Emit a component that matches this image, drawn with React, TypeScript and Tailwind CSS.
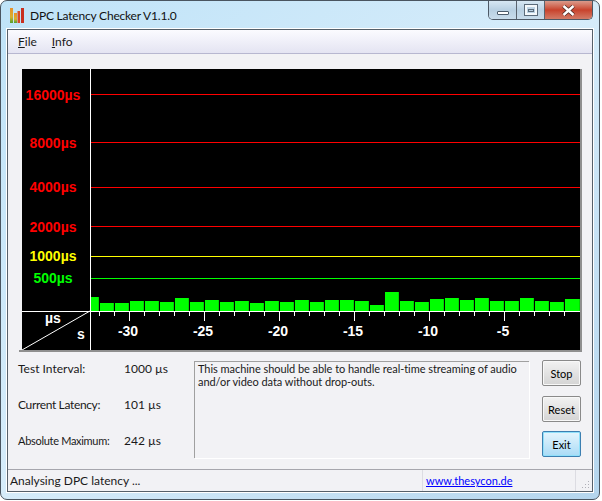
const bars: [number, number, number][] = [
  [91, 8, 297],
  ...[303, 303, 301, 301, 302, 298, 302, 300, 302, 301, 303, 301, 302, 300, 302, 300, 300, 301, 305, 292, 301, 302, 299, 298, 300, 298, 301, 301, 298, 301, 302, 299].map(
    (t, i): [number, number, number] => [100 + i * 15, i === 31 ? 15 : 14, t],
  ),
];

const gridLines = [
  { y: 94, c: "#ff0000", label: "16000µs", ty: 100 },
  { y: 142, c: "#ff0000", label: "8000µs", ty: 148 },
  { y: 187, c: "#ff0000", label: "4000µs", ty: 192 },
  { y: 226, c: "#ff0000", label: "2000µs", ty: 232 },
  { y: 256, c: "#ffff00", label: "1000µs", ty: 261 },
  { y: 278, c: "#00ff00", label: "500µs", ty: 283 },
];

const majors = [
  { x: 129, t: "-30" },
  { x: 204, t: "-25" },
  { x: 279, t: "-20" },
  { x: 354, t: "-15" },
  { x: 429, t: "-10" },
  { x: 504, t: "-5" },
];

const ticks = Array.from({ length: 32 }, (_, i) => 99 + i * 15);

function Chart() {
  return (
    <svg width={558} height={281} viewBox="22 69 558 281" className="block bg-black font-['Liberation_Sans',sans-serif]">
      {gridLines.map((l) => (
        <g key={l.label}>
          <rect x={90} y={l.y} width={490} height={1} fill={l.c} />
          <text x={53} y={l.ty} textAnchor="middle" fontSize={14} fontWeight={700} fill={l.c}>
            {l.label}
          </text>
        </g>
      ))}
      {bars.map(([x, w, t]) => (
        <g key={x}>
          <rect x={x} y={t} width={w} height={311 - t} fill="#00ff00" />
          <rect x={x + w - 1} y={t} width={1} height={311 - t} fill="#00d800" />
        </g>
      ))}
      <rect x={90} y={69} width={1} height={281} fill="#ffffff" />
      <rect x={22} y={311} width={558} height={1} fill="#ffffff" />
      {ticks.map((x) => (
        <rect key={x} x={x} y={311} width={1} height={5} fill="#ffffff" />
      ))}
      {majors.map((m) => (
        <g key={m.x}>
          <rect x={m.x} y={311} width={1} height={10} fill="#ffffff" />
          <text x={m.x - 1} y={336} textAnchor="middle" fontSize={14} fontWeight={700} fill="#ffffff">
            {m.t}
          </text>
        </g>
      ))}
      <line x1={22} y1={350} x2={90} y2={311} stroke="#ffffff" strokeWidth={1} />
      <text x={45} y={323} fontSize={14} fontWeight={700} fill="#ffffff">µs</text>
      <text x={77} y={339} fontSize={14} fontWeight={700} fill="#ffffff">s</text>
    </svg>
  );
}

function AppIcon() {
  return (
    <svg width={14} height={15} viewBox="0 0 14 15" className="block">
      <defs>
        <linearGradient id="ic" x1="0" y1="0" x2="0" y2="1">
          <stop offset="0" stopColor="#e8902a" />
          <stop offset="0.6" stopColor="#d8b030" />
          <stop offset="1" stopColor="#50a030" />
        </linearGradient>
      </defs>
      <rect x={0} y={0} width={3} height={15} fill="url(#ic)" />
      <rect x={4} y={5} width={3} height={10} fill="url(#ic)" />
      <rect x={7.5} y={3} width={2.5} height={12} fill="#d84a28" />
      <rect x={11} y={0} width={3} height={15} fill="#c83020" />
    </svg>
  );
}

function Stat({ label, value, labelClass }: { label: string; value: string; labelClass?: string }) {
  return (
    <div className="flex h-[36px] items-start pt-[1px]">
      <span className={labelClass ?? "w-[106px] whitespace-nowrap"}>{label}</span>
      <span className="whitespace-nowrap">{value}</span>
    </div>
  );
}

function Btn({ label, active }: { label: string; active?: boolean }) {
  return (
    <div
      className={
        active
          ? "flex h-[26px] w-[39px] items-center justify-center rounded-[2px] border border-[#3c7fb1] bg-gradient-to-b from-[#e5f5fd] to-[#a9dbf6] text-[11px] text-black shadow-[inset_0_0_0_1px_#90e0fa]"
          : "flex h-[26px] w-[39px] items-center justify-center rounded-[2px] border border-[#8a8a8a] bg-gradient-to-b from-[#f2f2f2] to-[#d4d4d4] text-[11px] text-black shadow-[inset_0_0_0_1px_#f8f8f8]"
      }
    >
      {label}
    </div>
  );
}

export default function App() {
  return (
    <div className="h-[501px] w-[602px] bg-white font-['Lato',sans-serif] text-[12px] leading-[13px] text-[#1a1a1a]">
      <div className="flex h-[500px] w-[600px] flex-col rounded-[7px] border border-[#4a5560] bg-gradient-to-br from-[#bfe3f8] via-[#d6ecfa] to-[#b5d6ee] px-[6px] pb-[7px]">
        <div className="flex h-[28px] items-start justify-between">
          <div className="flex items-center gap-[6px] pl-[3px] pt-[7px]">
            <AppIcon />
            <span className="tracking-[-0.2px] text-[#111111]">DPC Latency Checker V1.1.0</span>
          </div>
          <div className="flex h-[19px] overflow-hidden rounded-b-[5px] border border-t-0 border-[#4d5966]">
            <div className="flex w-[28px] items-end justify-center border-r border-[#59636e] bg-gradient-to-b from-[#d7e7f3] via-[#b8d0e2] to-[#c8dceb] pb-[4px]">
              <div className="h-[4px] w-[12px] rounded-[1px] border border-[#4b5b6a] bg-white" />
            </div>
            <div className="flex w-[28px] items-center justify-center border-r border-[#59636e] bg-gradient-to-b from-[#d7e7f3] via-[#b8d0e2] to-[#c8dceb]">
              <div className="flex h-[10px] w-[12px] items-center justify-center border-2 border-[#f4f8fb] shadow-[0_0_0_1px_#5b6b7a]">
                <div className="h-[3px] w-[6px] border border-[#5b6b7a]" />
              </div>
            </div>
            <div className="flex w-[47px] items-center justify-center bg-gradient-to-b from-[#d99a8b] via-[#c8422c] to-[#d27a66]">
              <svg width={13} height={11} viewBox="0 0 13 11">
                <path d="M1.5 1 L11.5 10 M11.5 1 L1.5 10" stroke="#4a2a24" strokeWidth={4} />
                <path d="M1.5 1 L11.5 10 M11.5 1 L1.5 10" stroke="#ffffff" strokeWidth={2.4} />
              </svg>
            </div>
          </div>
        </div>

        <div className="flex flex-1 flex-col border border-[#56606a] bg-[#f2f2f5] shadow-[0_0_0_1px_#ffffff]">
          <div className="flex h-[24px] items-center gap-[15px] border-b border-[#b7b7d0] bg-gradient-to-b from-[#fbfbff] to-[#e4e4f2] pl-[10px]">
            <span><span className="underline">F</span>ile</span>
            <span><span className="underline">I</span>nfo</span>
          </div>

          <div className="flex flex-1 flex-col pl-[11px] pt-[15px]">
            <div className="w-[563px] border-b-2 border-r-2 border-[#8f8f8f] pl-[3px]">
              <Chart />
            </div>

            <div className="flex pt-[9px]">
              <div className="-ml-[1px] w-[176px]">
                <Stat label="Test Interval:" value="1000 µs" />
                <Stat label="Current Latency:" value="101 µs" labelClass="w-[106px] whitespace-nowrap tracking-[-0.35px]" />
                <Stat label="Absolute Maximum:" value="242 µs" labelClass="w-[106px] whitespace-nowrap text-[11px] tracking-[-0.3px]" />
              </div>
              <div className="h-[97px] w-[335px] border-l border-t border-[#a0a0a0] px-[3px] text-[11px] tracking-[-0.05px] text-[#1a1a1a] shadow-[1px_1px_0_#ffffff]">
                This machine should be able to handle real-time streaming of audio
                <br />
                and/or video data without drop-outs.
              </div>
              <div className="-mt-[1px] ml-[13px] flex flex-col gap-[10px]">
                <Btn label="Stop" />
                <Btn label="Reset" />
                <div className="-mt-[1px]">
                  <Btn label="Exit" active />
                </div>
              </div>
            </div>
          </div>

          <div className="flex h-[22px] items-center border-t border-[#a6a6ad] pl-[2px] text-[#1a1a1a]">
            <span className="w-[412px]">Analysing DPC latency ...</span>
            <div className="flex h-full flex-1 items-center border-l border-[#dcdce2] pl-[3px]">
              <span className="text-[11px] text-[#0000ff] underline">www.thesycon.de</span>
            </div>
            <div className="flex h-full w-[17px] items-end justify-end border-l border-[#dcdce2] pb-[2px] pr-[2px]">
              <svg width={8} height={8} viewBox="0 0 8 8">
                <rect x={6} y={0} width={1} height={1} fill="#b0b0b8" />
                <rect x={3} y={3} width={1} height={1} fill="#b0b0b8" />
                <rect x={6} y={3} width={1} height={1} fill="#b0b0b8" />
                <rect x={0} y={6} width={1} height={1} fill="#b0b0b8" />
                <rect x={3} y={6} width={1} height={1} fill="#b0b0b8" />
                <rect x={6} y={6} width={1} height={1} fill="#b0b0b8" />
              </svg>
            </div>
          </div>
        </div>
      </div>
    </div>
  );
}
